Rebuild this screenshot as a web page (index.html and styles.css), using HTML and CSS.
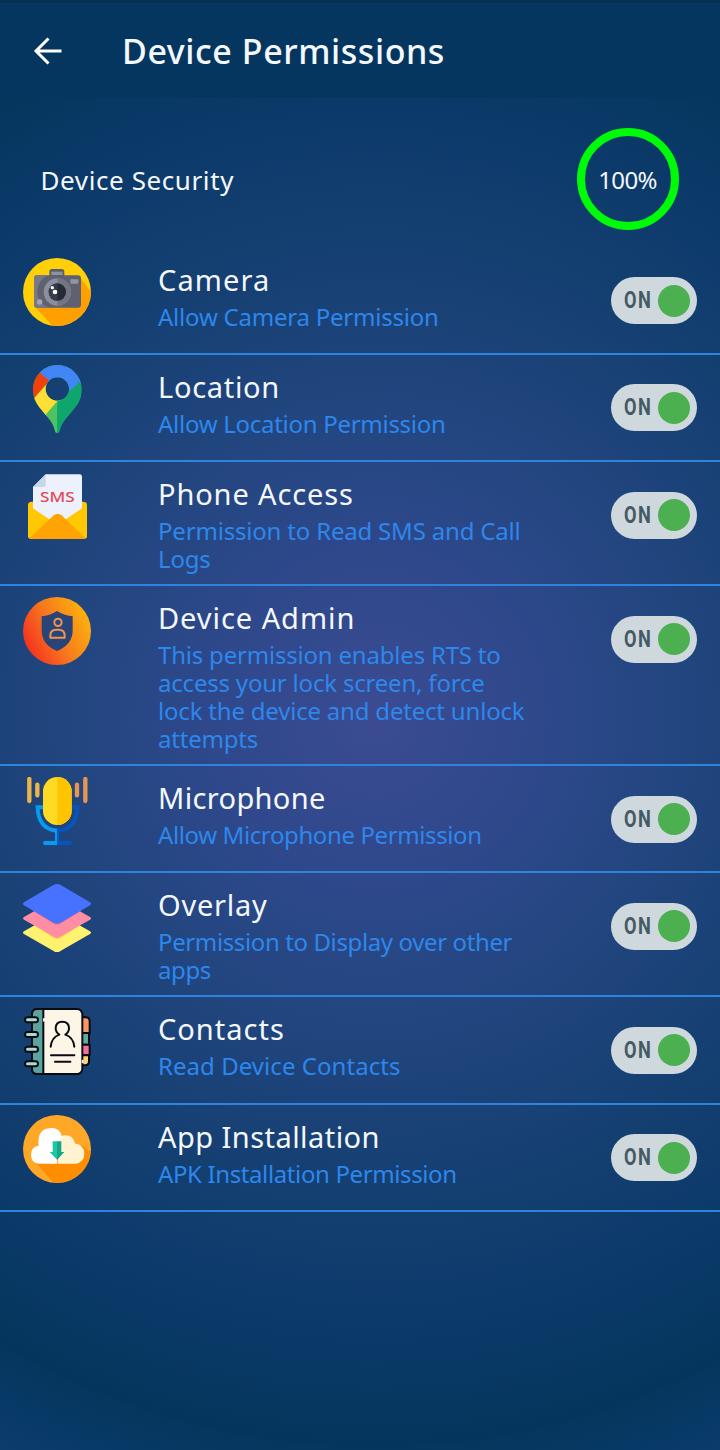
FILE: index.html
```html
<!DOCTYPE html>
<html lang="en">
<head>
<meta charset="utf-8">
<title>Device Permissions</title>
<link rel="stylesheet" href="styles.css">
</head>
<body>
<div class="screen">
  <header class="bar">
    <svg class="back" viewBox="0 0 30 28" fill="none" stroke="#fff" stroke-width="3"><path d="M15.500 1.500 3 14l12.500 12.500M3 14h25.500"/></svg>
    <h1 class="heading">Device Permissions</h1>
  </header>
  <section class="summary">
    <span class="summary-label">Device Security</span>
    <span class="ring"><span class="percent">100%</span></span>
  </section>
  <main class="list">
    <section class="row">
      <svg class="icon" viewBox="39 54 204 204">
        <circle cx="141" cy="156" r="102" fill="#ffcf08"/>
        <path d="M76 202l50 54a102 102 0 0 0 117-100l-36-47z" fill="#ffa000"/>
        <path d="M118 109v-14q0-8 8-8h29q8 0 8 8v14z" fill="#5c5d6b"/>
        <rect x="124" y="95" width="34" height="10" fill="#8e919f"/>
        <rect x="72" y="106" width="141" height="97" rx="9" fill="#606170"/>
        <path d="M81 106q-9 0-9 9v79q0 9 9 9h34a52 52 0 0 1 0-97z" fill="#777986"/>
        <circle cx="142" cy="156" r="41" fill="#8b8e9c"/>
        <path d="M142 115a41 41 0 0 1 0 82z" fill="#737582"/>
        <circle cx="142" cy="156" r="26" fill="#242a36"/>
        <path d="M116 156a26 26 0 0 1 26-26v52a26 26 0 0 1-26-26" fill="#363d49"/>
        <circle cx="135" cy="156" r="7" fill="#fff"/><circle cx="127" cy="143" r="5" fill="#fff"/>
        <rect x="181" y="118" width="24" height="13" rx="2" fill="#9295a4"/>
        <circle cx="89" cy="186" r="8" fill="#a5a7b3"/>
      </svg>
      <div class="copy"><h2 class="title t-camera">Camera</h2><p class="note n-camera">Allow Camera Permission</p></div>
      <div class="switch"><span class="state">ON</span><i class="knob"></i></div>
    </section>
    <section class="row">
      <svg class="icon" viewBox="39 30 204 204">
        <clipPath id="pin"><path fill-rule="evenodd" clip-rule="evenodd" d="M142 30a73 73 0 0 1 73 73c0 32-14 48-30 67-17 20-32 35-36 58q-1 6-7 6t-7-6c-4-23-19-38-36-58-16-19-30-35-30-67a73 73 0 0 1 73-73M142 67a35 35 0 1 0 0 70 35 35 0 1 0 0-70"/></clipPath>
        <g clip-path="url(#pin)">
          <path d="M60 20h165v220H60z" fill="#0fa66e"/>
          <path d="M85 57l25-40h120v58l-43 27-45 15z" fill="#4285f4"/>
          <path d="M60 30l28 22 30 26-43 48H60z" fill="#f0410b"/>
          <path d="M76 125l42-47 24 40 22 8-56 58H60v-43z" fill="#ffde36"/>
          <path d="M108 178l34-40v100h-20z" fill="#4fc35f"/>
          <path d="M187 102l43-42v80l-88 94v-96z" fill="#0fa66e"/>
        </g>
      </svg>
      <div class="copy"><h2 class="title t-location">Location</h2><p class="note n-location">Allow Location Permission</p></div>
      <div class="switch"><span class="state">ON</span><i class="knob"></i></div>
    </section>
    <section class="row">
      <svg class="icon" viewBox="39 23 204 204">
        <path d="M54 119q0-10 12-10h153q12 0 12 10v93q0 9-10 9H64q-10 0-10-9z" fill="#ffc800"/>
        <path d="M69 65l38-38h102q7 0 7 7v104l-42 27H110l-41-27z" fill="#edf1fb"/>
        <path d="M69 65l38-38v32q0 6-6 6z" fill="#c9d6e8"/>
        <path d="M54 119l64 43-57 56q-7-1-7-7zM231 119l-64 43 57 56q7-1 7-7z" fill="#ffc800"/>
        <path d="M59 218l72-68q12-10 24 0l71 68q-3 3-8 3H66q-5 0-7-3" fill="#ffa404"/>
        <text class="sms" x="90" y="111" textLength="104" lengthAdjust="spacingAndGlyphs">SMS</text>
      </svg>
      <div class="copy"><h2 class="title t-phone">Phone Access</h2><p class="note n-phone">Permission to Read SMS and Call<br>Logs</p></div>
      <div class="switch"><span class="state">ON</span><i class="knob"></i></div>
    </section>
    <section class="row">
      <svg class="icon" viewBox="39 24 204 204">
        <linearGradient id="fire" x1="0" y1=".8" x2="1" y2=".3"><stop stop-color="#f4281f"/><stop offset=".48" stop-color="#f7761d"/><stop offset="1" stop-color="#fbb50d"/></linearGradient>
        <circle cx="141" cy="126" r="102" fill="url(#fire)"/>
        <path d="M141 66q24 15 47 16v42q0 43-47 62-46-19-46-62V82q24-1 46-16" fill="#294476"/>
        <g fill="none" stroke="#ef9452" stroke-width="6"><circle cx="144" cy="100" r="11"/><path d="M121 146v-6q0-18 18-18h7q18 0 18 18v6z" stroke-linejoin="round"/></g>
      </svg>
      <div class="copy"><h2 class="title t-admin">Device Admin</h2><p class="note n-admin">This permission enables RTS to<br>access your lock screen, force<br>lock the device and detect unlock<br>attempts</p></div>
      <div class="switch"><span class="state">ON</span><i class="knob"></i></div>
    </section>
    <section class="row">
      <svg class="icon" viewBox="39 24 204 204" fill="none" stroke-linecap="round">
        <path d="M99 115H83c0 40 20 68 58 70v37" stroke="#079af3" stroke-width="12"/>
        <path d="M186 115h16c0 40-20 68-55 70" stroke="#0754bd" stroke-width="12"/>
        <path d="M105 222h37" stroke="#079af3" stroke-width="12"/><path d="M180 222h-32" stroke="#0754bd" stroke-width="12"/>
        <path d="M144 180v48" stroke="#0754bd" stroke-width="5" stroke-linecap="butt"/>
        <rect x="99" y="24" width="86" height="144" rx="43" fill="#ffda24"/>
        <path d="M142 24a43 43 0 0 1 43 43v58a43 43 0 0 1-43 43z" fill="#fec400"/>
        <path d="M58 30v66M82 47v32" stroke="#edb447" stroke-width="13"/><path d="M201 47v32M226 30v66" stroke="#e89554" stroke-width="13"/>
      </svg>
      <div class="copy"><h2 class="title t-mic">Microphone</h2><p class="note n-mic">Allow Microphone Permission</p></div>
      <div class="switch"><span class="state">ON</span><i class="knob"></i></div>
    </section>
    <section class="row">
      <svg class="icon" viewBox="39 25 204 204">
        <path d="M42 167l91-52q8-4 16 0l91 52q6 4 0 8l-90 52q-9 6-18 0l-90-52q-6-4 0-8" fill="#fff26e"/>
        <path d="M72 148l69-38 70 38-59 38q-11 7-22 0z" fill="#ffc94d"/>
        <path d="M42 124l91-52q8-4 16 0l91 52q6 4 0 8l-90 51q-9 6-18 0l-90-51q-6-4 0-8" fill="#ff8da3"/>
        <path d="M70 106h143l-61 38q-11 7-22 0z" fill="#ff708c"/>
        <path d="M42 80l88-52q11-6 22 0l88 52q6 4 0 9l-88 52q-11 6-22 0L42 89q-6-5 0-9" fill="#4772ff"/>
      </svg>
      <div class="copy"><h2 class="title t-overlay">Overlay</h2><p class="note n-overlay">Permission to Display over other<br>apps</p></div>
      <div class="switch"><span class="state">ON</span><i class="knob"></i></div>
    </section>
    <section class="row">
      <svg class="icon" viewBox="39 23 204 204" stroke="#080b12" stroke-width="6" stroke-linejoin="round" stroke-linecap="round">
        <path d="M215 51h12q12 0 12 13v37h-24z" fill="#ff9667"/><path d="M215 98h22v35h-22z" fill="#5caaa2"/><path d="M215 133h24v32h-24z" fill="#f6709f"/><path d="M215 165h22v18q0 12-12 12h-10z" fill="#ffd475"/>
        <rect x="66" y="26" width="151" height="195" rx="16" fill="#fdf5e5"/>
        <path d="M100 26H82q-16 0-16 16v163q0 16 16 16h18z" fill="#5ba39f"/>
        <g fill="#a8dcd3"><rect x="45" y="51" width="39" height="15" rx="7.500"/><rect x="45" y="95" width="39" height="15" rx="7.500"/><rect x="45" y="139" width="39" height="15" rx="7.500"/><rect x="45" y="183" width="39" height="15" rx="7.500"/></g>
        <path d="M122 139q3-28 26-36-11-7-11-19 0-20 20-20t20 20q0 12-11 19 24 8 27 36M123 165h70M135 184h46" fill="none"/>
        <path d="M102 56v5M218 181v5" stroke="#fdf5e5"/>
      </svg>
      <div class="copy"><h2 class="title t-contacts">Contacts</h2><p class="note n-contacts">Read Device Contacts</p></div>
      <div class="switch"><span class="state">ON</span><i class="knob"></i></div>
    </section>
    <section class="row">
      <svg class="icon" viewBox="39 24 204 204">
        <circle cx="141" cy="126" r="102" fill="#ffa726"/>
        <path d="M74 163l57 64a102 102 0 0 0 111-91l-26-21z" fill="#ff8d00"/>
        <path d="M143 170V100q5-15 24-15 23 0 27 24 29 4 29 31 0 25-26 30z" fill="#fff3d2"/>
        <path d="M86 170q-23-3-23-26 0-25 23-28-6-51 37-53 29 0 33 27-12 8-15 20v60z" fill="#fff"/>
        <path d="M128 103h14v56l-23-24h9z" fill="#1fc6a3"/><path d="M141 103h13v32h9l-22 24z" fill="#12a889"/>
      </svg>
      <div class="copy"><h2 class="title t-app">App Installation</h2><p class="note n-app">APK Installation Permission</p></div>
      <div class="switch"><span class="state">ON</span><i class="knob"></i></div>
    </section>
  </main>
</div>
</body>
</html>
```
FILE: styles.css
```css
* { box-sizing: border-box; }
body { margin: 0; font-family: "Noto Sans", sans-serif; color: #f4f8fc; }
h1, h2, p { margin: 0; font-weight: 400; white-space: nowrap; }
.screen {
  height: 1450px;
  overflow: hidden;
  background: radial-gradient(circle at 375px 718px, #3b4b92 0, #2d488a 180px, #20457d 330px, #143f71 480px, #0c3a6b 600px, #04365d 725px, #073966 770px, #0d3d6c 840px);
}
.bar { height: 98px; padding: 0 33px; display: flex; align-items: flex-start; background: #04365f; border-top: 3px solid #043054; }
.back { width: 30px; height: 28px; margin-top: 34px; flex: none; }
.heading { margin: 24px 0 0 59px; font-size: 34px; line-height: 48px; font-weight: 500; letter-spacing: .57px; }
.summary { height: 149.5px; padding: 30px 41px 0 40.5px; display: flex; justify-content: space-between; align-items: flex-start; }
.summary-label { margin-top: 35px; font-size: 26px; line-height: 34px; letter-spacing: .6px; }
.ring { width: 102px; height: 102px; border: 8px solid #00fb08; border-radius: 50%; display: flex; align-items: center; justify-content: center; }
.percent { font-size: 24px; line-height: 30px; letter-spacing: -.6px; margin: 2px 1px 0 0; }
.row { display: flex; align-items: flex-start; min-height: 107.3px; padding: 0 23px; border-bottom: 2px solid #2e83dc; }
.icon { width: 68px; height: 68px; margin-top: 10.5px; flex: none; }
.copy { flex: 1; margin-left: 67px; padding: 13px 0 11px; min-width: 0; }
.title { font-size: 29px; line-height: 38px; }
.note { margin-top: 4px; font-size: 24px; line-height: 28px; color: #2d87ec; }
.switch { width: 86px; height: 47px; margin-top: 29.5px; padding: 0 7.5px 0 13px; flex: none; display: flex; align-items: center; justify-content: space-between; border-radius: 24px; background: #cfd8dc; }
.state { width: 28px; font: 700 23px/27px Roboto, sans-serif; letter-spacing: 2px; color: #455a64; transform: scaleX(.79); transform-origin: left; }
.knob { width: 32px; height: 32px; border-radius: 50%; background: #4caf50; }
.sms { font: 500 43px "Noto Sans", sans-serif; fill: #df4a55; }

/* Per-label tracking */
.t-camera { letter-spacing: 1.1px; }
.t-location { letter-spacing: .7px; }
.t-phone { letter-spacing: .87px; }
.t-admin { letter-spacing: .95px; }
.t-mic { letter-spacing: .35px; }
.t-overlay { letter-spacing: .75px; }
.t-contacts { letter-spacing: 1px; }
.t-app { letter-spacing: .45px; }
.n-camera { letter-spacing: -.22px; }
.n-location { letter-spacing: -.28px; }
.n-phone { letter-spacing: -.19px; }
.n-admin { letter-spacing: -.2px; }
.n-mic { letter-spacing: -.39px; }
.n-overlay { letter-spacing: -.38px; }
.n-contacts { letter-spacing: .05px; }
.n-app { letter-spacing: -.38px; }
```
